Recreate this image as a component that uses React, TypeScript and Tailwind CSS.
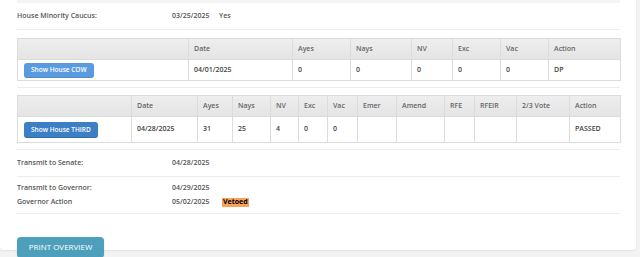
import React from "react";

type Col = { label: string; width: number };

const cowCols: Col[] = [
  { label: "", width: 171 },
  { label: "Date", width: 104 },
  { label: "Ayes", width: 58 },
  { label: "Nays", width: 61 },
  { label: "NV", width: 41 },
  { label: "Exc", width: 48 },
  { label: "Vac", width: 48 },
  { label: "Action", width: 72 },
];

const thirdCols: Col[] = [
  { label: "", width: 114 },
  { label: "Date", width: 66 },
  { label: "Ayes", width: 35 },
  { label: "Nays", width: 38 },
  { label: "NV", width: 28 },
  { label: "Exc", width: 29 },
  { label: "Vac", width: 30 },
  { label: "Emer", width: 39 },
  { label: "Amend", width: 48 },
  { label: "RFE", width: 30 },
  { label: "RFEIR", width: 42 },
  { label: "2/3 Vote", width: 53 },
  { label: "Action", width: 51 },
];

function VoteTable({
  cols,
  values,
  button,
  buttonClass,
  headerH,
  bodyH,
}: {
  cols: Col[];
  values: string[];
  button: string;
  buttonClass: string;
  headerH: string;
  bodyH: string;
}) {
  return (
    <table className="w-[603px] table-fixed border-collapse border border-[#dcdcdc] text-[7px] font-semibold text-[#555]">
      <colgroup>
        {cols.map((c, i) => (
          <col key={i} style={{ width: c.width }} />
        ))}
      </colgroup>
      <thead>
        <tr className={`${headerH} bg-gradient-to-b from-[#eeeeee] to-[#e4e4e4]`}>
          {cols.map((c, i) => (
            <th key={i} className="border border-[#dcdcdc] px-[5px] text-left font-semibold text-[#666]">
              {c.label}
            </th>
          ))}
        </tr>
      </thead>
      <tbody>
        <tr className={`${bodyH} bg-white`}>
          <td className="border border-[#dcdcdc] px-[6px]">
            <button
              type="button"
              className={`rounded-[3px] px-[7px] text-[6.5px] font-semibold text-white ${buttonClass}`}
            >
              {button}
            </button>
          </td>
          {values.map((v, i) => (
            <td key={i} className="border border-[#dcdcdc] px-[5px] text-[#444]">
              {v}
            </td>
          ))}
        </tr>
      </tbody>
    </table>
  );
}

function Line() {
  return <div className="h-px w-[603px] bg-[#ececec]" />;
}

export default function App() {
  return (
    <div
      className="h-[257px] w-[640px] overflow-hidden bg-[#f3f3f3]"
      style={{ fontFamily: '"Open Sans", "Liberation Sans", sans-serif' }}
    >
      <div className="relative h-[250px] w-[636px] rounded-b-[3px] bg-white pl-[17px] shadow-[0_1px_2px_rgba(0,0,0,0.08)]">
        <div className="h-[3px] w-[603px] bg-[#f4f4f4]" />
        <div className="flex h-[26px] items-center text-[7px] font-semibold text-[#555]">
          <span className="w-[155px]">House Minority Caucus:</span>
          <span className="w-[47px]">03/25/2025</span>
          <span>Yes</span>
        </div>
        <Line />
        <div className="h-[8px]" />
        <VoteTable
          cols={cowCols}
          values={["04/01/2025", "0", "0", "0", "0", "0", "DP"]}
          button="Show House COW"
          buttonClass="h-[15px] bg-[#5a9be0] shadow-[inset_0_-1px_0_rgba(0,0,0,0.1)]"
          headerH="h-[21px]"
          bodyH="h-[21px]"
        />
        <div className="h-[6px]" />
        <Line />
        <div className="h-[7px]" />
        <VoteTable
          cols={thirdCols}
          values={["04/28/2025", "31", "25", "4", "0", "0", "", "", "", "", "", "PASSED"]}
          button="Show House THIRD"
          buttonClass="h-[16px] bg-[#3c7fc4] shadow-[inset_0_-1px_0_rgba(0,0,0,0.15)]"
          headerH="h-[21px]"
          bodyH="h-[26px]"
        />
        <div className="h-[6px]" />
        <Line />
        <div className="flex h-[26px] items-center text-[7px] font-semibold text-[#555]">
          <span className="w-[155px]">Transmit to Senate:</span>
          <span>04/28/2025</span>
        </div>
        <Line />
        <div className="flex flex-col justify-center gap-[4px] py-[6px] text-[7px] font-semibold text-[#555]">
          <div className="flex h-[10px] items-center">
            <span className="w-[155px]">Transmit to Governor:</span>
            <span>04/29/2025</span>
          </div>
          <div className="flex h-[10px] items-center">
            <span className="w-[155px]">Governor Action</span>
            <span className="w-[50px]">05/02/2025</span>
            <span className="flex h-[9px] items-center bg-[#f7a35b] px-[1px] font-bold text-black">Vetoed</span>
          </div>
        </div>
        <Line />
        <div className="h-[18px]" />
        <button
          type="button"
          className="h-[21px] w-[87px] rounded-[4px] bg-[#4e9fbb] text-[8px] text-white shadow-[0_1px_2px_rgba(0,0,0,0.15)]"
        >
          PRINT OVERVIEW
        </button>
      </div>
    </div>
  );
}
